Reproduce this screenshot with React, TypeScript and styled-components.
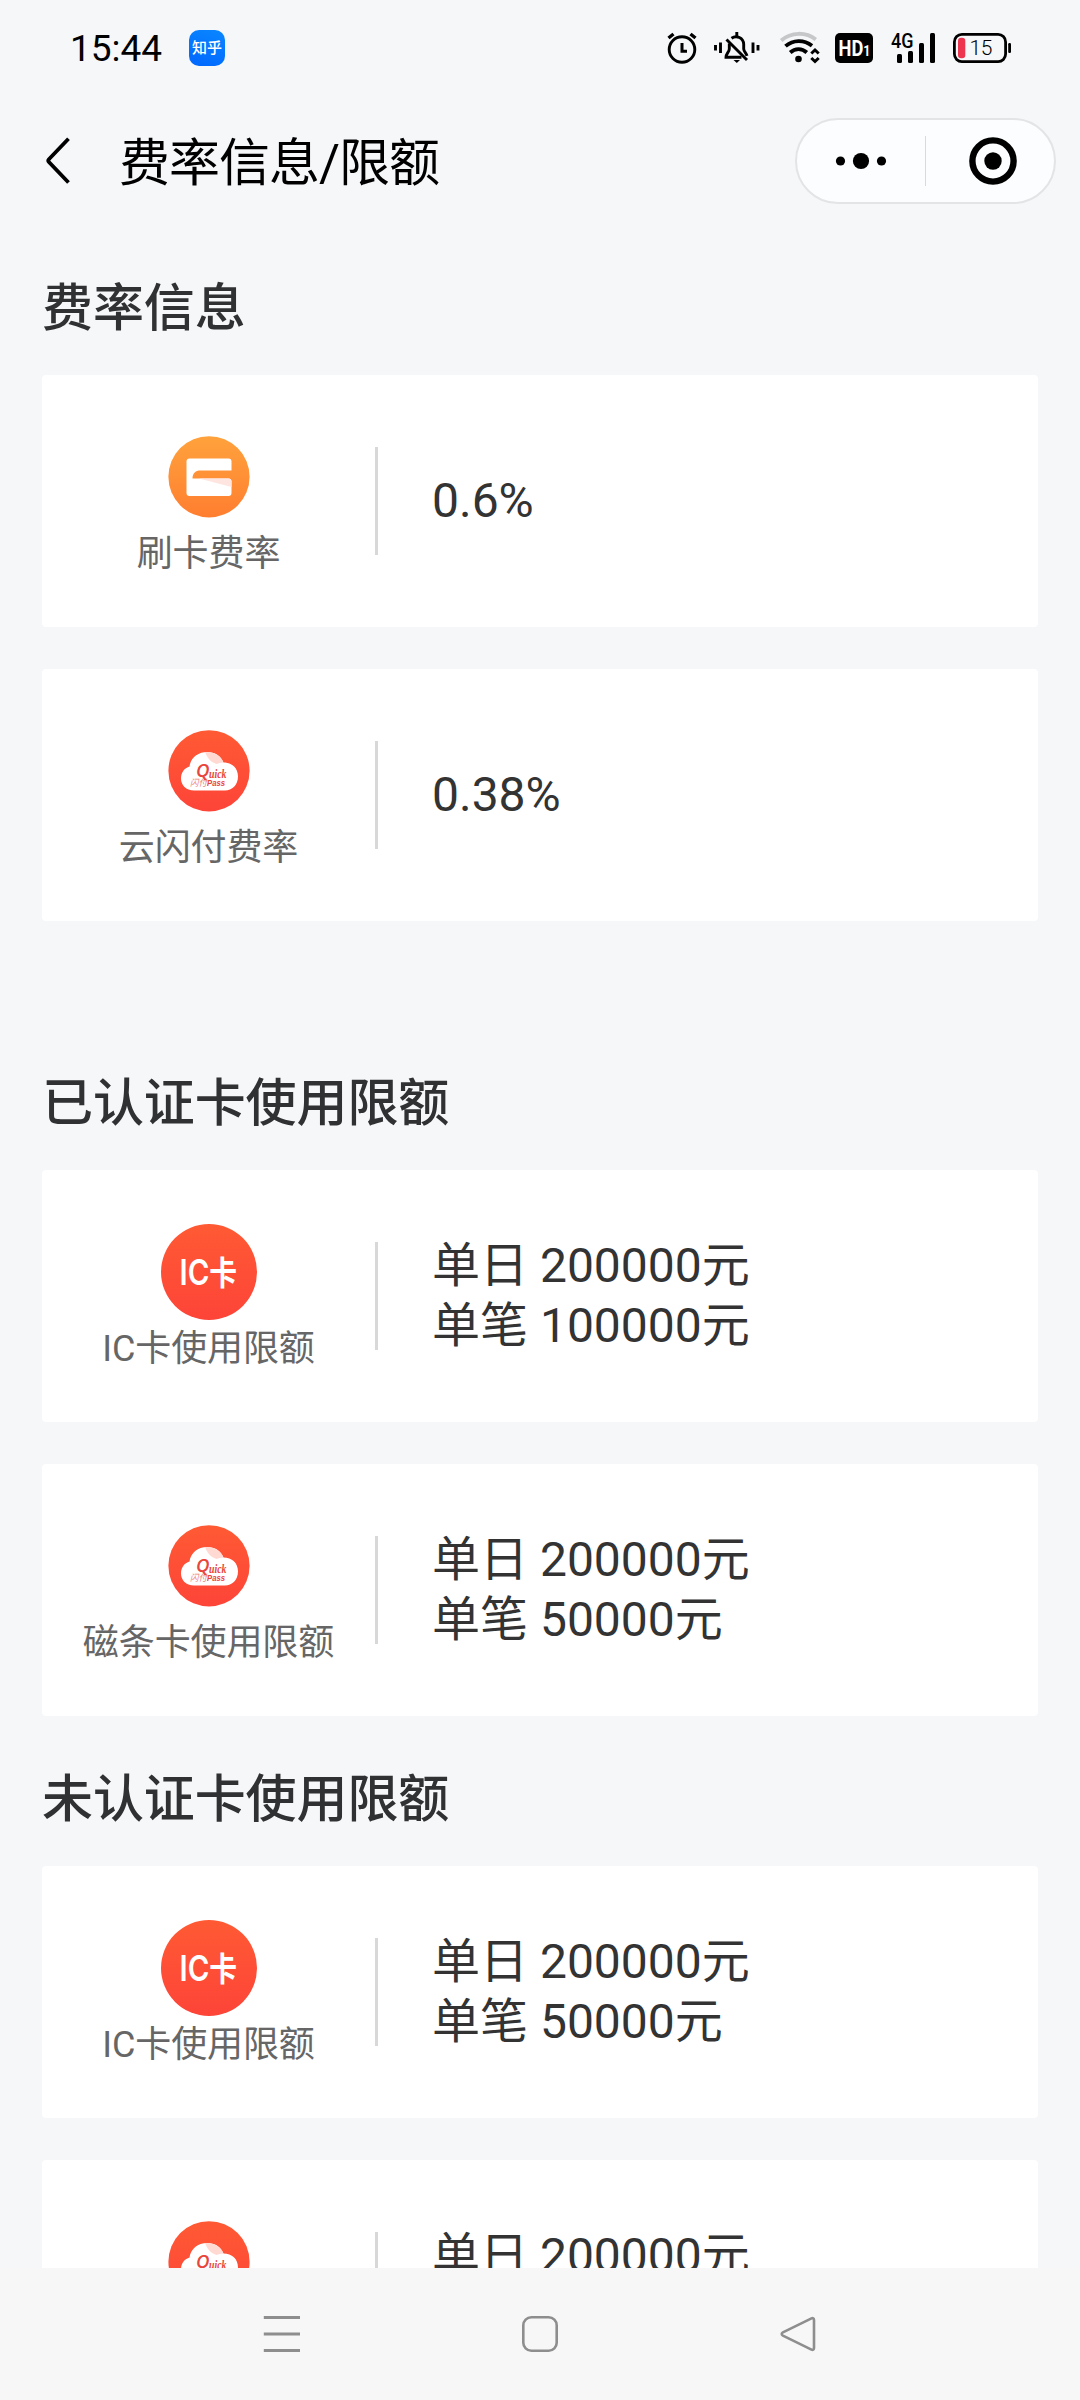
import React from "react";
import styled, { createGlobalStyle } from "styled-components";

const GlobalStyle = createGlobalStyle`
  * { box-sizing: border-box; }
  body {
    margin: 0;
    background: #f5f7f9;
    font-family: Roboto, "Noto Sans CJK SC", sans-serif;
  }
`;

const Screen = styled.div`
  width: 1080px;
  height: 2400px;
  display: flex;
  flex-direction: column;
  overflow: hidden;
  background: #f5f7f9;
`;

const StatusBar = styled.header`
  height: 96px;
  flex: none;
  display: flex;
  align-items: center;
  padding: 0 68px 0 70px;
`;

const Clock = styled.span`
  font-size: 37px;
  line-height: 44px;
  color: #000;
  width: 119px;
  padding-top: 1px;
`;

const AppBadge = styled.span`
  width: 36px;
  height: 36px;
  border-radius: 10px;
  background: linear-gradient(200deg, #0a87ff, #0066ff);
  color: #fff;
  font-size: 15px;
  font-weight: 500;
  line-height: 36px;
  text-align: center;
  white-space: nowrap;
`;

const StatusIcons = styled.div`
  margin-left: auto;
  display: flex;
  align-items: center;

  svg {
    display: block;
    overflow: visible;
  }
`;

const Gap = styled.span<{ $w: number }>`
  width: ${(p) => p.$w}px;
`;

const TitleBar = styled.div`
  height: 130px;
  flex: none;
  display: flex;
  align-items: center;
  padding: 0 24px 0 43px;
`;

const PageTitle = styled.h1`
  margin: 0 auto 0 46px;
  padding-top: 6px;
  font-size: 51px;
  line-height: 64px;
  letter-spacing: -1px;
  font-weight: 400;
  color: #000;
`;

const Capsule = styled.div`
  width: 261px;
  height: 86px;
  border: 2px solid #e3e4e6;
  border-radius: 43px;
  background: #fcfdfe;
  display: flex;
  align-items: center;

  svg {
    display: block;
  }
`;

const CapsuleHalf = styled.div<{ $indent?: number }>`
  flex: 0 0 128px;
  display: flex;
  justify-content: center;
  padding-left: ${(p) => p.$indent ?? 0}px;
`;

const CapsuleRule = styled.span`
  width: 1px;
  height: 50px;
  background: #d9dadc;
`;

const Content = styled.main`
  flex: 1;
  min-height: 0;
  overflow: hidden;
  padding: 0 42px;
`;

const Section = styled.section<{ $top: number }>`
  padding-top: ${(p) => p.$top}px;
`;

const SectionTitle = styled.h2`
  margin: 0 0 30px;
  height: 72px;
  line-height: 72px;
  font-size: 51px;
  letter-spacing: -0.1px;
  font-weight: 500;
  color: #303133;
`;

const CardList = styled.div`
  display: flex;
  flex-direction: column;
  gap: 42px;
`;

const Card = styled.article`
  height: 252px;
  border-radius: 4px;
  background: #fff;
  display: flex;
  align-items: center;
`;

const Kind = styled.div`
  width: 333px;
  height: 252px;
  padding-top: 54px;
  display: flex;
  flex-direction: column;
  align-items: center;

  svg {
    display: block;
  }
`;

const KindLabel = styled.span`
  margin-top: 7px;
  font-size: 36px;
  line-height: 44px;
  letter-spacing: -0.1px;
  color: #666;
  white-space: nowrap;
`;

const Rule = styled.span`
  width: 3px;
  height: 108px;
  background: #d8d8d8;
`;

const Values = styled.div`
  padding-left: 54px;
  font-size: 48px;
  line-height: 60px;
  color: #333;
`;

const NavBar = styled.nav`
  height: 132px;
  flex: none;
  display: flex;
  justify-content: space-between;
  align-items: center;
  padding: 0 262px;
  background: #f7f7f7;

  svg {
    display: block;
  }
`;

const AlarmIcon = () => (
  <svg width="30" height="32" viewBox="0 0 30 32" fill="none" stroke="#000">
    <circle cx="15" cy="17.500" r="12.800" strokeWidth="2.900" />
    <path d="M15 11v8.200h5" strokeWidth="3" />
    <path d="M1.500 6 6.500 2M28.500 6 23.500 2" strokeWidth="3.400" />
  </svg>
);

const MutedBellIcon = () => (
  <svg width="46" height="32" viewBox="0 0 46 32" fill="none" stroke="#000" strokeWidth="2.900">
    <path d="M1.500 13v5.500M6.500 10.500v10.500M39 10.500v10.500M44 13v5.500" />
    <path d="M15.300 11.500v5.500c0 3-3.300 4.500-3.300 8.300h15.500" />
    <path d="M17.500 6.300c5-3.500 12-.5 12.200 6v4.500c.2 3 2.500 4 3.300 7" />
    <path d="M22.800 0v4M12.500 7.500 33 28" />
    <path d="M19.500 28h6.500l-3.200 3z" fill="#000" stroke="none" />
  </svg>
);

const WifiIcon = () => (
  <svg width="41" height="32" viewBox="0 0 41 32" fill="none" strokeWidth="3.800">
    <path d="M1.200 8.500C11-.300 26-.300 35.800 7.500" stroke="#c6c7c9" />
    <path d="M5.500 14.200c7.600-6.800 18.400-6.800 26.500-.5" stroke="#000" />
    <path d="M10.200 20.500c5-4.600 11.600-4.600 16.600 0" stroke="#000" />
    <circle cx="18.500" cy="27" r="3.300" fill="#000" />
    <path d="M31.300 21.500 35 18l3.700 3.500M31.300 26l3.700 3.500 3.700-3.500" stroke="#000" strokeWidth="3" />
  </svg>
);

const HdIcon = () => (
  <svg width="38" height="30" viewBox="0 0 38 30">
    <rect width="38" height="30" rx="5" fill="#000" />
    <text x="3.500" y="23" fontSize="22" fontWeight="700" fill="#fff" textLength="32" lengthAdjust="spacingAndGlyphs">
      HD<tspan fontSize="15">1</tspan>
    </text>
  </svg>
);

const SignalIcon = () => (
  <svg width="45" height="30" viewBox="0 0 45 30">
    <text x="0" y="14.500" fontSize="20" fontWeight="500" textLength="22.500" lengthAdjust="spacingAndGlyphs">4G</text>
    <rect x="6" y="21" width="5" height="9" rx="1.500" />
    <rect x="17" y="18" width="5" height="12" rx="1.500" />
    <rect x="28" y="10" width="5" height="20" rx="1.500" />
    <rect x="39" y="0" width="5" height="30" rx="1.500" />
  </svg>
);

const BatteryIcon = () => (
  <svg width="59" height="30" viewBox="0 0 59 30">
    <rect x="1.400" y="1.400" width="51.200" height="27.200" rx="7.500" fill="none" stroke="#000" strokeWidth="2.800" />
    <rect x="55.200" y="10" width="2.800" height="10" rx="1.200" />
    <rect x="5" y="4.700" width="7.300" height="20.600" rx="3.200" fill="#ee3550" />
    <text x="16.500" y="22.200" fontSize="21" fontWeight="300" textLength="23" lengthAdjust="spacing">15</text>
  </svg>
);

const BackIcon = () => (
  <svg width="30" height="48" viewBox="0 0 30 48" fill="none" stroke="#000" strokeWidth="3.800">
    <path d="M25.500 1.800 5.900 22.300a2 2 0 0 0 0 2.700L25.500 45.500" strokeLinejoin="round" />
  </svg>
);

const MoreIcon = () => (
  <svg width="52" height="18" viewBox="0 0 52 18">
    <circle cx="5.500" cy="9" r="4.600" />
    <circle cx="26" cy="9" r="8.100" />
    <circle cx="46.500" cy="9" r="4.600" />
  </svg>
);

const TargetIcon = () => (
  <svg width="48" height="48" viewBox="0 0 48 48">
    <circle cx="24" cy="24" r="20.600" fill="none" stroke="#000" strokeWidth="6.400" />
    <circle cx="24" cy="24" r="8.700" />
  </svg>
);

const SwipeCardIcon = () => (
  <svg width="96" height="96" viewBox="0 0 96 96">
    <defs>
      <linearGradient id="swipe" x1="0" y1="0" x2="0" y2="1">
        <stop offset="0" stopColor="#ffa23c" />
        <stop offset="1" stopColor="#ff7e30" />
      </linearGradient>
    </defs>
    <circle cx="48" cy="47.800" r="40.600" fill="url(#swipe)" />
    <path d="M28.500 29.500h39a3 3 0 0 1 3 3V41.500H39c-4 0-7.500 2.500-7.500 8h36a3 3 0 0 1 3 3v11.500a3 3 0 0 1-3 3h-39a3 3 0 0 1-3-3v-31.500a3 3 0 0 1 3-3z" fill="#fff" />
    <path d="M38 49.500h29.500a3 3 0 0 1 3 3v5.500z" fill="#ffe5e0" />
  </svg>
);

const RedGradient = ({ id }: { id: string }) => (
  <defs>
    <linearGradient id={id} x1="0" y1="0" x2="0" y2="1">
      <stop offset="0" stopColor="#ff5a34" />
      <stop offset="1" stopColor="#fd4438" />
    </linearGradient>
  </defs>
);

const QuickPassIcon = () => (
  <svg width="96" height="96" viewBox="0 0 96 96">
    <RedGradient id="quick" />
    <circle cx="48" cy="47.800" r="40.600" fill="url(#quick)" />
    <path d="M33 67.500c-8 0-13-5.500-13-12 0-6 3.500-10.500 8.500-12C29.500 35 37 29 46 29c8 0 14 4 16.500 10.500C71 39.500 77 45 77 53.500S71 67.500 64 67.500z" fill="#fff" />
    <path d="M44 29c9-.500 16 4 18.500 10.500-3 .2-5 .600-7 1.500C49 39 46 34 44 29z" fill="#ffd9d2" />
    <g fill="#e8463c" fontStyle="italic">
      <text x="35" y="54" fontSize="18.500" fontWeight="600" fontFamily="Open Sans, sans-serif" textLength="13.500" lengthAdjust="spacingAndGlyphs">Q</text>
      <text x="48" y="54.500" fontSize="11.500" fontWeight="700" fontFamily="Liberation Serif, serif" textLength="17.500" lengthAdjust="spacingAndGlyphs">uick</text>
      <text x="29" y="62.500" fontSize="9" textLength="17" lengthAdjust="spacingAndGlyphs" opacity="0.700">闪付</text>
      <text x="46" y="62.500" fontSize="9.500" fontWeight="700" fontFamily="Liberation Sans, sans-serif" textLength="18" lengthAdjust="spacingAndGlyphs">Pass</text>
    </g>
  </svg>
);

const ChipCardIcon = () => (
  <svg width="96" height="96" viewBox="0 0 96 96">
    <RedGradient id="chip" />
    <circle cx="48" cy="48" r="48" fill="url(#chip)" />
    <text x="18.500" y="61" fontSize="35" fontWeight="600" fontFamily="Inter, Noto Sans CJK SC, sans-serif" fill="#fff" textLength="57.500" lengthAdjust="spacingAndGlyphs">
      IC<tspan fontSize="33" fontWeight="700">卡</tspan>
    </text>
  </svg>
);

const MenuIcon = () => (
  <svg width="38" height="40" viewBox="0 0 38 40" stroke="#8e8e8e" strokeWidth="3">
    <path d="M1.800 3.500h36.200M1.800 20h36.200M1.800 36.500h36.200" />
  </svg>
);

const HomeIcon = () => (
  <svg width="38" height="40" viewBox="0 0 38 40" fill="none" stroke="#8e8e8e" strokeWidth="2.600">
    <rect x="2.300" y="3.300" width="33.400" height="33.400" rx="8" />
  </svg>
);

const ReturnIcon = () => (
  <svg width="38" height="40" viewBox="0 0 38 40" fill="none" stroke="#8e8e8e" strokeWidth="2.600">
    <path d="M31.500 4.400 2.900 18.300c-1.600.9-1.600 2.500 0 3.400l28.600 13.900c1.300.6 2.500 0 2.500-1.600V6c0-1.600-1.200-2.200-2.500-1.600z" strokeLinejoin="round" />
  </svg>
);

type Entry = { icon: React.ComponentType; label: string; values: string[] };
type Group = { title: string; top: number; entries: Entry[] };

const groups: Group[] = [
  {
    title: "费率信息",
    top: 47,
    entries: [
      { icon: SwipeCardIcon, label: "刷卡费率", values: ["0.6%"] },
      { icon: QuickPassIcon, label: "云闪付费率", values: ["0.38%"] },
    ],
  },
  {
    title: "已认证卡使用限额",
    top: 147,
    entries: [
      { icon: ChipCardIcon, label: "IC卡使用限额", values: ["单日 200000元", "单笔 100000元"] },
      { icon: QuickPassIcon, label: "磁条卡使用限额", values: ["单日 200000元", "单笔 50000元"] },
    ],
  },
  {
    title: "未认证卡使用限额",
    top: 48,
    entries: [
      { icon: ChipCardIcon, label: "IC卡使用限额", values: ["单日 200000元", "单笔 50000元"] },
      { icon: QuickPassIcon, label: "磁条卡使用限额", values: ["单日 200000元", "单笔 50000元"] },
    ],
  },
];

export default function App() {
  return (
    <>
      <GlobalStyle />
      <Screen>
        <StatusBar>
          <Clock>15:44</Clock>
          <AppBadge>知乎</AppBadge>
          <StatusIcons>
            <AlarmIcon />
            <Gap $w={17} />
            <MutedBellIcon />
            <Gap $w={20} />
            <WifiIcon />
            <Gap $w={14} />
            <HdIcon />
            <Gap $w={18} />
            <SignalIcon />
            <Gap $w={17} />
            <BatteryIcon />
          </StatusIcons>
        </StatusBar>
        <TitleBar>
          <BackIcon />
          <PageTitle>费率信息/限额</PageTitle>
          <Capsule>
            <CapsuleHalf>
              <MoreIcon />
            </CapsuleHalf>
            <CapsuleRule />
            <CapsuleHalf $indent={5}>
              <TargetIcon />
            </CapsuleHalf>
          </Capsule>
        </TitleBar>
        <Content>
          {groups.map((group) => (
            <Section key={group.title} $top={group.top}>
              <SectionTitle>{group.title}</SectionTitle>
              <CardList>
                {group.entries.map(({ icon: Icon, label, values }) => (
                  <Card key={label}>
                    <Kind>
                      <Icon />
                      <KindLabel>{label}</KindLabel>
                    </Kind>
                    <Rule />
                    <Values>
                      {values.map((value) => (
                        <div key={value}>{value}</div>
                      ))}
                    </Values>
                  </Card>
                ))}
              </CardList>
            </Section>
          ))}
        </Content>
        <NavBar>
          <MenuIcon />
          <HomeIcon />
          <ReturnIcon />
        </NavBar>
      </Screen>
    </>
  );
}
